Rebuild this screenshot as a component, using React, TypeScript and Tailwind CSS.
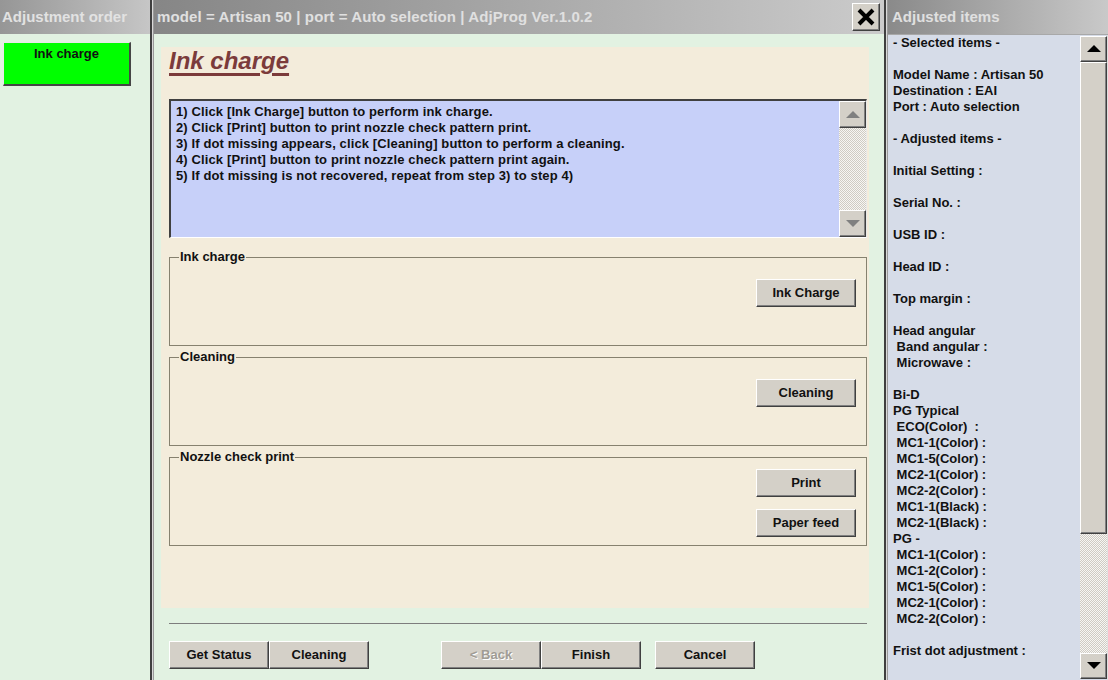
import React from 'react';

const raised =
  'bg-[#d4d0c8] border-t border-l border-b border-r border-t-white border-l-white border-b-[#404040] border-r-[#404040] shadow-[inset_-1px_-1px_0_#808080]';

const track =
  'bg-[image:repeating-conic-gradient(#cfcbc3_0_25%,#f7f6f3_0_50%)] bg-[length:2px_2px]';

const Arrow = ({ up, color }: { up?: boolean; color: string }) => (
  <svg width="14" height="8" viewBox="0 0 14 8">
    {up ? (
      <polygon points="0,7 14,7 7,0" fill={color} />
    ) : (
      <polygon points="0,0 14,0 7,7" fill={color} />
    )}
  </svg>
);

const WinButton = ({ label, disabled, className = '' }: { label: string; disabled?: boolean; className?: string }) => (
  <button
    className={`${raised} flex h-[28px] w-[100px] items-center justify-center text-[13px] font-bold ${
      disabled ? 'text-[#a09c94] [text-shadow:1px_1px_0_#ffffff]' : 'text-[#111]'
    } ${className}`}
  >
    {label}
  </button>
);

const GroupBox = ({ title, children, className = '' }: { title: string; children?: React.ReactNode; className?: string }) => (
  <div className={`relative h-[89px] border border-[#86816f] ${className}`}>
    <span className="absolute -top-[9px] left-[9px] bg-[#f3ecdb] px-[1px] leading-4 text-[#111]">{title}</span>
    {children}
  </div>
);

const Divider = () => (
  <div className="flex h-full w-[4px]">
    <div className="w-[2px] bg-[#3f3f3f]" />
    <div className="w-[1px] bg-[#d9d9d9]" />
    <div className="w-[1px] bg-[#9a9a9a]" />
  </div>
);

const steps = [
  '1) Click [Ink Charge] button to perform ink charge.',
  '2) Click [Print] button to print nozzle check pattern print.',
  '3) If dot missing appears, click [Cleaning] button to perform a cleaning.',
  '4) Click [Print] button to print nozzle check pattern print again.',
  '5) If dot missing is not recovered, repeat from step 3) to step 4)',
];

const items = [
  '- Selected items -',
  '',
  'Model Name : Artisan 50',
  'Destination : EAI',
  'Port : Auto selection',
  '',
  '- Adjusted items -',
  '',
  'Initial Setting :',
  '',
  'Serial No. :',
  '',
  'USB ID :',
  '',
  'Head ID :',
  '',
  'Top margin :',
  '',
  'Head angular',
  ' Band angular :',
  ' Microwave :',
  '',
  'Bi-D',
  'PG Typical',
  ' ECO(Color)  :',
  ' MC1-1(Color) :',
  ' MC1-5(Color) :',
  ' MC2-1(Color) :',
  ' MC2-2(Color) :',
  ' MC1-1(Black) :',
  ' MC2-1(Black) :',
  'PG -',
  ' MC1-1(Color) :',
  ' MC1-2(Color) :',
  ' MC1-5(Color) :',
  ' MC2-1(Color) :',
  ' MC2-2(Color) :',
  '',
  'Frist dot adjustment :',
];

export default function App() {
  return (
    <div className="flex h-[680px] w-[1108px] overflow-hidden bg-[#e2f2e2] font-['Liberation_Sans',Arial,sans-serif] text-[13px] font-bold text-black">
      {/* Left: adjustment order */}
      <div className="flex w-[150px] flex-col">
        <div className="flex h-[34px] items-center bg-linear-to-r from-[#969696] to-[#c6c6c6] pl-[2px] text-[15px] text-[#e2e2e2]">
          Adjustment order
        </div>
        <div className="px-[3px] pt-[8px]">
          <div className="h-[44px] w-[128px] border-t border-l border-t-[#e8e8e8] border-l-[#e8e8e8] border-b-2 border-r-2 border-b-[#454545] border-r-[#454545] bg-[#00ff00] pt-[3px] text-center leading-4 text-[#111]">
            Ink charge
          </div>
        </div>
      </div>

      <Divider />

      {/* Middle */}
      <div className="flex w-[730px] flex-col">
        <div className="flex h-[34px] items-center justify-between bg-linear-to-r from-[#868686] to-[#cbcbcb] pl-[3px] pr-[4px]">
          <span className="text-[15px] tracking-[0.1px] text-[#e0e0e0]">model = Artisan 50 | port = Auto selection | AdjProg Ver.1.0.2</span>
          <button className={`${raised} flex h-[28px] w-[28px] items-center justify-center`}>
            <svg width="18" height="18" viewBox="0 0 18 18">
              <path d="M2 2 L16 16 M16 2 L2 16" stroke="#000" strokeWidth="4" />
            </svg>
          </button>
        </div>

        <div className="ml-[7px] mr-[15px] mt-[13px] h-[561px] bg-[#f3ecdb] pl-[8px] pr-[2px]">
          <h1 className="h-[28px] text-[24px] leading-[28px] italic text-[#7b3b3b] underline decoration-[3px] underline-offset-[4px]">
            Ink charge
          </h1>

          <div className="mt-[24px] flex h-[139px] border-t-2 border-l-2 border-t-[#404040] border-l-[#404040] border-b border-r border-b-white border-r-[#e8e8e8]">
            <div className="flex-1 bg-[#c7d0f9] pl-[5px] pt-[3px] leading-4 tracking-[0.12px] text-[#111]">
              {steps.map(s => (
                <div key={s}>{s}</div>
              ))}
            </div>
            <div className="flex w-[27px] flex-col">
              <div className={`${raised} flex h-[27px] items-center justify-center`}>
                <Arrow up color="#808080" />
              </div>
              <div className={`flex-1 ${track}`} />
              <div className={`${raised} flex h-[27px] items-center justify-center`}>
                <Arrow color="#808080" />
              </div>
            </div>
          </div>

          <GroupBox title="Ink charge" className="mt-[19px]">
            <div className="flex justify-end pr-[10px] pt-[21px]">
              <WinButton label="Ink Charge" />
            </div>
          </GroupBox>
          <GroupBox title="Cleaning" className="mt-[11px]">
            <div className="flex justify-end pr-[10px] pt-[21px]">
              <WinButton label="Cleaning" />
            </div>
          </GroupBox>
          <GroupBox title="Nozzle check print" className="mt-[11px]">
            <div className="flex flex-col items-end gap-[12px] pr-[10px] pt-[11px]">
              <WinButton label="Print" />
              <WinButton label="Paper feed" />
            </div>
          </GroupBox>
        </div>

        <div className="ml-[15px] mr-[17px] mt-[15px] h-[1px] bg-[#7d7d7d]" />

        <div className="ml-[15px] mt-[17px] flex">
          <WinButton label="Get Status" />
          <WinButton label="Cleaning" />
          <WinButton label="< Back" disabled className="ml-[72px]" />
          <WinButton label="Finish" />
          <WinButton label="Cancel" className="ml-[14px]" />
        </div>
      </div>

      <Divider />

      {/* Right: adjusted items */}
      <div className="flex w-[220px] flex-col">
        <div className="flex h-[34px] items-center bg-linear-to-r from-[#8a8a8a] to-[#c9c9c9] pl-[4px] text-[15px] text-[#e0e0e0]">
          Adjusted items
        </div>
        <div className="flex min-h-0 flex-1 border-t border-[#a8a8a8]">
          <div className="w-[192px] bg-[#d6dce8] pl-[5px] leading-4 text-[#111]">
            {items.map((t, i) => (
              <div key={i} className="h-4 whitespace-pre">
                {t}
              </div>
            ))}
          </div>
          <div className="flex w-[27px] flex-col bg-[#d6dce8] pb-[1px] pt-[1px]">
            <div className={`${raised} flex h-[26px] items-center justify-center`}>
              <Arrow up color="#000" />
            </div>
            <div className={`${raised} h-[472px]`} />
            <div className={`flex-1 ${track}`} />
            <div className={`${raised} flex h-[26px] items-center justify-center`}>
              <Arrow color="#000" />
            </div>
          </div>
          <div className="w-[1px] bg-[#e0e0e0]" />
        </div>
      </div>
    </div>
  );
}
